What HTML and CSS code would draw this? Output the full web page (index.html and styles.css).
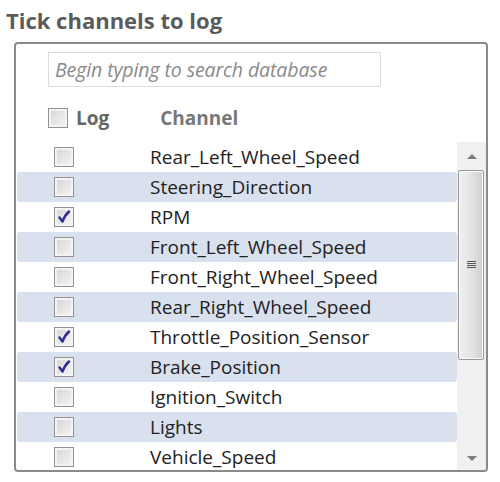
FILE: index.html
```html
<!DOCTYPE html>
<html>

<head>
    <title>Tick channels to log</title>

    <link rel="stylesheet" href="styles.css">
</head>

<body>

    <h2 class="title">Tick channels to log</h2>

    <div class="panel">
        <div class="search">Begin typing to search database</div>

        <div class="head">
            <span class="box"></span>
            <span class="head-log">Log</span>
            <span class="head-channel">Channel</span>
        </div>

        <div class="list">
            <div id="rows" class="rows"></div>
            <div class="scrollbar">
                <div class="arrow arrow-up"></div>
                <div class="thumb"><span class="grip"></span></div>
                <div class="track"></div>
                <div class="arrow arrow-down"></div>
            </div>
        </div>
    </div>

    <script>
        // The channels and whether they are ticked
        let channels = [
            ['Rear_Left_Wheel_Speed', false],
            ['Steering_Direction', false],
            ['RPM', true],
            ['Front_Left_Wheel_Speed', false],
            ['Front_Right_Wheel_Speed', false],
            ['Rear_Right_Wheel_Speed', false],
            ['Throttle_Position_Sensor', true],
            ['Brake_Position', true],
            ['Ignition_Switch', false],
            ['Lights', false],
            ['Vehicle_Speed', false]
        ];

        let tick = '<svg viewBox="0 0 20 20" width="20" height="20"><path d="M5.5 10.5 L8.5 14.5 Q11 8 15 4.5" fill="none" stroke="#2b2b8f" stroke-width="2.4" stroke-linecap="round" stroke-linejoin="round"/></svg>';

        document.querySelector('#rows').innerHTML = channels.map((c, i) => {
            return '<div class="row' + (i % 2 ? ' row-alt' : '') + '">' +
                '<span class="box">' + (c[1] ? tick : '') + '</span>' +
                '<span class="name">' + c[0] + '</span>' +
                '</div>';
        }).join('');
    </script>
</body>

</html>
```

FILE: styles.css
```css
body {
    margin: 0;
    padding: 6px 0 0 6px;
    font-family: "Open Sans", "Liberation Sans", sans-serif;
    background: #fff;
}

.title {
    margin: 0;
    font-size: 22px;
    font-weight: bold;
    line-height: 28px;
    color: #5b5b5b;
}

.panel {
    margin: 8px 0 0 8px;
    width: 470px;
    height: 426px;
    border: 2px solid #8a8a8a;
    border-radius: 4px;
    box-sizing: content-box;
    overflow: hidden;
}

/**
 * Search box
 */
.search {
    margin: 8px 0 0 32px;
    width: 319px;
    height: 33px;
    padding: 0 6px;
    border: 1px solid #dcdcdc;
    font-size: 19.5px;
    font-style: italic;
    line-height: 33px;
    color: #8a8a8a;
    letter-spacing: -0.1px;
    white-space: nowrap;
}

.head {
    display: flex;
    align-items: center;
    height: 22px;
    margin: 20px 0 0 32px;
    font-weight: bold;
    font-size: 19px;
}

.head-log {
    margin-left: 8px;
    color: #666;
}

.head-channel {
    margin-left: 51px;
    color: #777;
}

/**
 * Channel list with its scrollbar
 */
.list {
    display: flex;
    margin-top: 13px;
}

.rows {
    width: 441px;
    padding-left: 1px;
}

.row {
    display: flex;
    align-items: center;
    height: 30px;
    border-radius: 3px;
}

.row-alt {
    background: #d9e0ee;
}

.row .box {
    margin-left: 37px;
}

.name {
    margin-left: 76px;
    font-size: 19px;
    color: #222;
    white-space: nowrap;
}

.box {
    display: inline-block;
    flex: none;
    width: 20px;
    height: 20px;
    box-sizing: border-box;
    border: 1px solid #939393;
    background: linear-gradient(135deg, #d4d4d4, #f6f6f6);
    box-shadow: inset 0 0 0 2px #f4f4f4;
    position: relative;
}

.box svg {
    position: absolute;
    left: -1px;
    top: -1px;
}

.scrollbar {
    display: flex;
    flex-direction: column;
    width: 29px;
    height: 330px;
    background: #f0f0f0;
}

.arrow {
    height: 28px;
    position: relative;
}

.arrow::after {
    content: '';
    position: absolute;
    left: 10px;
    top: 12px;
    border-left: 5px solid transparent;
    border-right: 5px solid transparent;
}

.arrow-up::after {
    border-bottom: 5px solid #7a7a7a;
}

.arrow-down::after {
    border-top: 5px solid #7a7a7a;
    top: 12px;
}

.thumb {
    margin: 0 2px 0 1px;
    height: 188px;
    border: 1px solid #979797;
    border-radius: 2px;
    background: linear-gradient(90deg, #f0f0f0, #e4e4e4 50%, #cfcfcf);
    box-shadow: inset 0 0 0 1px #fafafa;
    display: flex;
    align-items: center;
    justify-content: center;
}

.grip {
    width: 9px;
    height: 8px;
    background: repeating-linear-gradient(180deg, #5a5a5a 0 1px, #e0e0e0 1px 2px);
}

.track {
    flex: 1;
}
```
